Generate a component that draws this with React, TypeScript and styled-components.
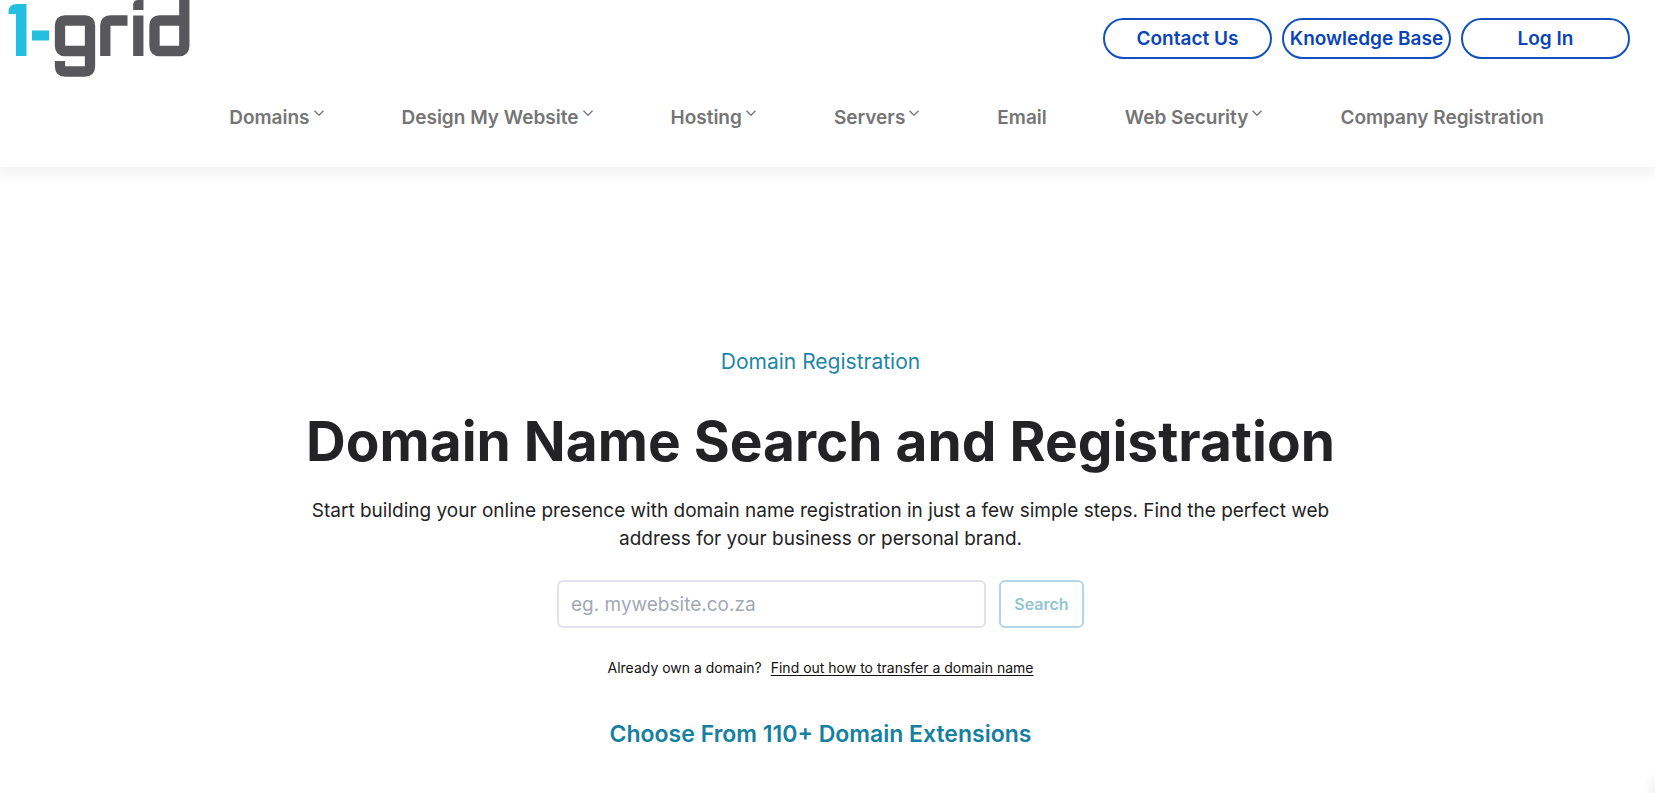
import React from "react";
import styled, { createGlobalStyle } from "styled-components";

const GlobalStyle = createGlobalStyle`
  *, *::before, *::after { box-sizing: border-box; }
  body {
    margin: 0;
    background: #fff;
    color: #232325;
    font-family: Inter, "Liberation Sans", sans-serif;
  }
`;

const Header = styled.header`
  display: flex;
  flex-direction: column;
  padding-bottom: 33px;
  background: #fff;
  box-shadow: 0 0 16px 6px rgba(0, 0, 0, 0.06);
`;

const TopBar = styled.div`
  display: flex;
  justify-content: space-between;
  align-items: flex-start;
  padding: 0 25px 0 8px;
`;

const LogoLink = styled.a`
  display: block;
  line-height: 0;
`;

const Actions = styled.div`
  display: flex;
  gap: 10px;
  padding-top: 18px;
`;

const ActionButton = styled.button`
  width: 169px;
  height: 41px;
  padding: 0;
  border: 2px solid #1450bd;
  border-radius: 21px;
  background: #fff;
  color: #0a44b9;
  font: 600 19px/24px Inter, sans-serif;
  white-space: nowrap;
`;

const Nav = styled.nav`
  display: flex;
  justify-content: center;
  gap: 78px;
  margin-top: 25px;
  padding-left: 118px;
`;

const NavLink = styled.a`
  display: flex;
  align-items: flex-start;
  gap: 4px;
  color: #757575;
  font-size: 19px;
  font-weight: 600;
  line-height: 32px;
  text-decoration: none;
  white-space: nowrap;
`;

const Chevron = styled.svg`
  width: 10px;
  height: 6px;
  margin-top: 8px;
`;

const Hero = styled.main`
  display: flex;
  flex-direction: column;
  align-items: center;
  padding: 180px 24px 40px 10px;
  text-align: center;
`;

const Eyebrow = styled.p`
  margin: 0;
  color: #1e87a5;
  font-size: 21px;
  line-height: 30px;
`;

const Title = styled.h1`
  margin: 30px 0 0;
  font-size: 55px;
  font-weight: 700;
  line-height: 68px;
`;

const Lead = styled.p`
  max-width: 1040px;
  margin: 22px 0 0;
  font-size: 19px;
  line-height: 28px;
`;

const SearchForm = styled.form`
  display: flex;
  gap: 13px;
  margin-top: 27px;
`;

const SearchInput = styled.input`
  width: 429px;
  height: 48px;
  padding: 0 12px;
  border: 2px solid #dfe2ea;
  border-radius: 6px;
  background: #fff;
  font: 400 19px/28px Inter, sans-serif;
  &::placeholder { color: #a3a8b6; opacity: 1; }
`;

const SearchButton = styled.button`
  width: 85px;
  height: 48px;
  padding: 0;
  border: 2px solid #b0d8e2;
  border-radius: 6px;
  background: #fff;
  color: #92c5d4;
  font: 600 16px/24px Inter, sans-serif;
`;

const Transfer = styled.p`
  display: flex;
  gap: 9px;
  margin: 28px 0 0;
  color: #111;
  font-size: 14px;
  line-height: 24px;
`;

const TransferLink = styled.a`
  color: inherit;
  text-underline-offset: 2px;
`;

const Extensions = styled.h2`
  margin: 38px 0 0;
  color: #1680a0;
  font-size: 23px;
  font-weight: 600;
  line-height: 32px;
`;

const CornerShade = styled.div`
  position: fixed;
  right: 0;
  bottom: 0;
  width: 12px;
  height: 24px;
  background: radial-gradient(ellipse at bottom right, rgba(0, 0, 0, 0.05), transparent 70%);
`;

const NAV_ITEMS = [
  { label: "Domains", menu: true },
  { label: "Design My Website", menu: true },
  { label: "Hosting", menu: true },
  { label: "Servers", menu: true },
  { label: "Email", menu: false },
  { label: "Web Security", menu: true },
  { label: "Company Registration", menu: false },
];

const Logo = () => (
  <svg width="184" height="77" viewBox="8 0 184 77" role="img" aria-label="1-grid">
    <g fill="#22bfe0">
      <path d="M26.5 4V56H16V14H8.500V12Q8.500 4 17 4Z" />
      <rect x="32" y="30.500" width="17" height="10" />
    </g>
    <g fill="none" stroke="#58585c" strokeWidth="10.300">
      <path d="M90 51H65Q60 51 60 46V25.500Q60 20.500 65 20.500H85Q90 20.500 90 25.500V66.500Q90 71.500 85 71.500H65Q60 71.500 60 66.500V61" />
      <path d="M105.300 56V25.500Q105.300 20.500 110.300 20.500H127.500" />
      <path d="M138.300 56V15.500" />
      <path d="M184.300 0V46Q184.300 51 179.300 51H159.500Q154.500 51 154.500 46V25.500Q154.500 20.500 159.500 20.500H184.300" />
    </g>
    <path fill="#58585c" d="M133.200 10V5Q133.200 0 138.200 0H143.500V10Z" />
  </svg>
);

export default function App() {
  return (
    <>
      <GlobalStyle />
      <Header>
        <TopBar>
          <LogoLink href="#" aria-label="1-grid home"><Logo /></LogoLink>
          <Actions>
            <ActionButton type="button">Contact Us</ActionButton>
            <ActionButton type="button">Knowledge Base</ActionButton>
            <ActionButton type="button">Log In</ActionButton>
          </Actions>
        </TopBar>
        <Nav aria-label="Main">
          {NAV_ITEMS.map((item) => (
            <NavLink key={item.label} href="#">
              {item.label}
              {item.menu && (
                <Chevron viewBox="0 0 10 6" aria-hidden="true">
                  <path d="M0.500 0.700L5 5.200L9.500 0.700" fill="none" stroke="#757575" strokeWidth="1.300" />
                </Chevron>
              )}
            </NavLink>
          ))}
        </Nav>
      </Header>
      <Hero>
        <Eyebrow>Domain Registration</Eyebrow>
        <Title>Domain Name Search and Registration</Title>
        <Lead>
          Start building your online presence with domain name registration in just a few simple
          steps. Find the perfect web address for your business or personal brand.
        </Lead>
        <SearchForm onSubmit={(event) => event.preventDefault()}>
          <SearchInput type="text" aria-label="Domain name" placeholder="eg. mywebsite.co.za" />
          <SearchButton type="submit">Search</SearchButton>
        </SearchForm>
        <Transfer>
          Already own a domain? <TransferLink href="#">Find out how to transfer a domain name</TransferLink>
        </Transfer>
        <Extensions>Choose From 110+ Domain Extensions</Extensions>
      </Hero>
      <CornerShade aria-hidden="true" />
    </>
  );
}
